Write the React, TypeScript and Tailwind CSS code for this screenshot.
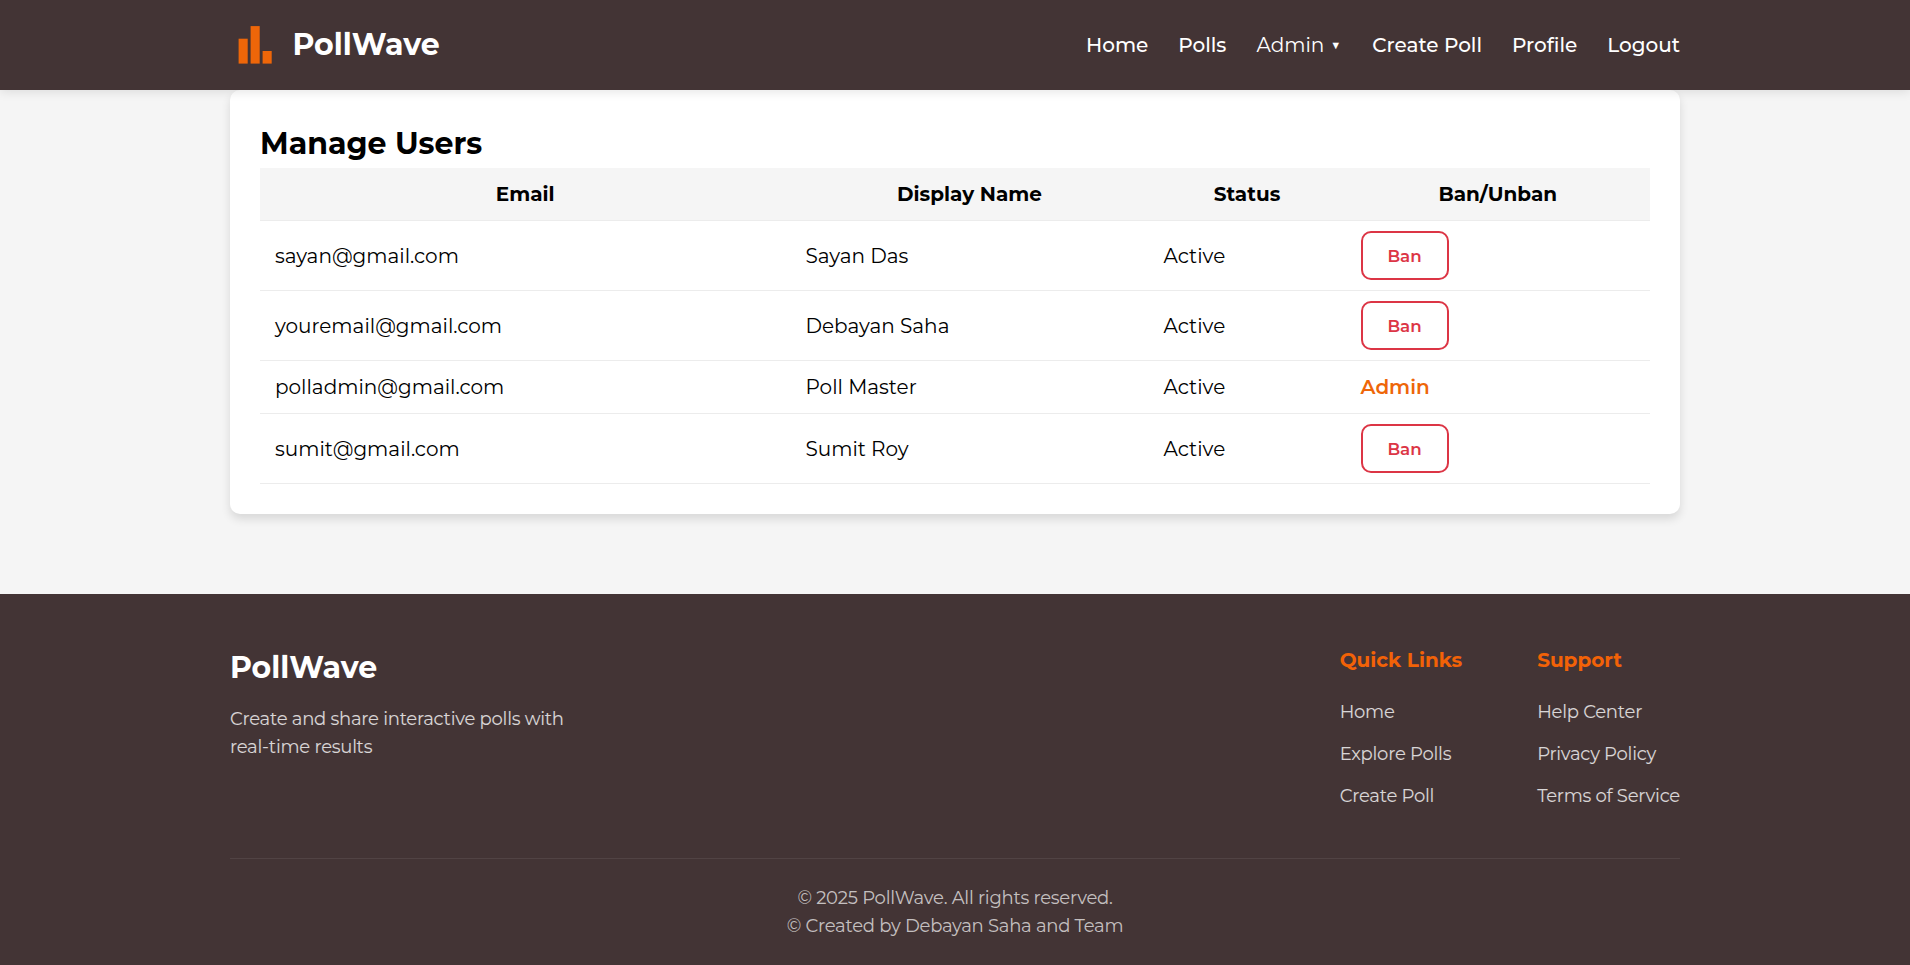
type User = { email: string; name: string; status: string; admin?: boolean };

const users: User[] = [
  { email: "sayan@gmail.com", name: "Sayan Das", status: "Active" },
  { email: "youremail@gmail.com", name: "Debayan Saha", status: "Active" },
  { email: "polladmin@gmail.com", name: "Poll Master", status: "Active", admin: true },
  { email: "sumit@gmail.com", name: "Sumit Roy", status: "Active" },
];

function Logo() {
  return (
    <svg width="50" height="50" viewBox="0 0 50 50" fill="#ee6609" aria-hidden="true">
      <rect x="8.6" y="18.7" width="9.1" height="24.9" />
      <rect x="20.6" y="6.1" width="9.1" height="37.5" />
      <rect x="32.6" y="31" width="9.1" height="12.6" />
    </svg>
  );
}

function Header() {
  return (
    <header className="relative z-10 h-[90px] bg-[#433435] text-white shadow-[0_2px_10px_rgba(0,0,0,0.1)]">
      <div className="mx-auto flex h-full w-[1450px] items-center justify-between">
        <a className="flex items-center gap-[12.5px] text-[30px] font-bold">
          <Logo />
          <span>PollWave</span>
        </a>
        <nav className="flex items-center gap-[30px] font-medium">
          <a>Home</a>
          <a>Polls</a>
          <button className="flex items-center gap-[6px] font-normal">
            Admin
            <span className="mr-px flex w-[11px] justify-center pb-px text-[15px] leading-none">▼</span>
          </button>
          <a>Create Poll</a>
          <a>Profile</a>
          <a>Logout</a>
        </nav>
      </div>
    </header>
  );
}

function UsersTable() {
  return (
    <table className="w-full table-fixed border-separate border-spacing-0">
      <colgroup>
        <col className="w-[530.5px]" />
        <col className="w-[358px]" />
        <col className="w-[197px]" />
        <col className="w-[304.5px]" />
      </colgroup>
      <thead>
        <tr className="bg-[#f5f5f5]">
          {["Email", "Display Name", "Status", "Ban/Unban"].map((title) => (
            <th key={title} className="border-b border-[#ececec] px-[15px] py-[10px] text-center font-bold">
              {title}
            </th>
          ))}
        </tr>
      </thead>
      <tbody>
        {users.map((user) => (
          <tr key={user.email}>
            <td className="border-b border-[#ececec] px-[15px] py-[10px]">{user.email}</td>
            <td className="border-b border-[#ececec] px-[15px] py-[10px]">{user.name}</td>
            <td className="border-b border-[#ececec] px-[15px] py-[10px]">{user.status}</td>
            <td className="border-b border-[#ececec] px-[15px] py-[10px]">
              {user.admin ? (
                <span className="font-semibold text-[#ee6609]">Admin</span>
              ) : (
                <button className="flex h-[49px] w-[88px] items-center justify-center rounded-[10px] border-2 border-[#dc3545] text-[16.67px] font-semibold text-[#dc3545]">
                  Ban
                </button>
              )}
            </td>
          </tr>
        ))}
      </tbody>
    </table>
  );
}

function LinkColumn({ title, links }: { title: string; links: string[] }) {
  return (
    <div>
      <h4 className="mb-5 font-bold text-[#f26207]">{title}</h4>
      <ul className="text-[18px] tracking-[-0.25px] text-white/80">
        {links.map((link) => (
          <li key={link} className="mb-[10px] leading-[32px]">
            {link}
          </li>
        ))}
      </ul>
    </div>
  );
}

function Footer() {
  return (
    <footer className="mt-[80px] h-[371px] bg-[#433435] pt-[50px] text-white">
      <div className="mx-auto w-[1450px]">
        <div className="flex h-[215px] justify-between border-b border-white/8">
          <div className="w-[375px]">
            <h3 className="mb-[13px] text-[30px] leading-[48px] font-bold">PollWave</h3>
            <p className="text-[18px] leading-[28px] tracking-[-0.25px] text-white/80">
              Create and share interactive polls with real-time results
            </p>
          </div>
          <div className="flex gap-[75px]">
            <LinkColumn title="Quick Links" links={["Home", "Explore Polls", "Create Poll"]} />
            <LinkColumn title="Support" links={["Help Center", "Privacy Policy", "Terms of Service"]} />
          </div>
        </div>
        <div className="pt-[25px] text-center text-[18px] leading-[28px] tracking-[-0.25px] text-white/70">
          <p>© 2025 PollWave. All rights reserved.</p>
          <p>© Created by Debayan Saha and Team</p>
        </div>
      </div>
    </footer>
  );
}

export default function App() {
  return (
    <div className="min-h-[965px] bg-[#f5f5f5] font-[Montserrat,Inter,sans-serif] text-[20px] leading-[32px] text-black">
      <Header />
      <main className="mx-auto w-[1450px] rounded-[10px] bg-white p-[30px] shadow-[0_5px_10px_rgba(0,0,0,0.12)]">
        <h2 className="text-[30px] leading-[48px] font-bold">Manage Users</h2>
        <UsersTable />
      </main>
      <Footer />
    </div>
  );
}
